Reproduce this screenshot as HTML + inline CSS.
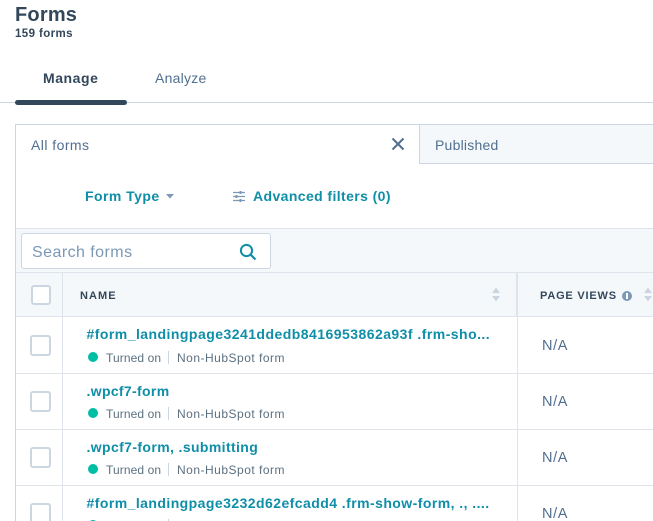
<!DOCTYPE html>
<html>
<head>
<meta charset="utf-8">
<style>
html,body{margin:0;padding:0;background:#fff}
#p{position:relative;width:653px;height:521px;overflow:hidden;background:#fff;font-family:"Liberation Sans",sans-serif;color:#33475b}
#p div,#p span.t{position:absolute;white-space:nowrap}
.b{font-weight:bold}
.r{background:#dfe3eb;height:1px;left:16px;width:637px}
.cb{left:30px;width:17px;height:17px;border:2px solid #cbd6e2;border-radius:3px;background:#fff}
.lnk{left:87px;font-size:14px;font-weight:bold;color:#0f8ea8;line-height:18px}
.dot{left:88px;width:10px;height:10px;border-radius:50%;background:#00bda5}
.st{left:106px;font-size:12px;color:#5c7080;line-height:16px;letter-spacing:.1px}
.sep{left:168px;width:1px;height:13px;background:#cbd6e2}
.ty{left:177px;font-size:12px;color:#5c7080;line-height:16px;letter-spacing:.5px}
.na{left:542px;font-size:14.5px;color:#516f90;line-height:18px;letter-spacing:.6px}
</style>
</head>
<body>
<div id="p">
<div class="b" style="left:15px;top:3px;font-size:20px;line-height:24px;letter-spacing:.2px">Forms</div>
<div class="b" style="left:15px;top:27px;font-size:11.5px;line-height:15px;letter-spacing:.4px">159 forms</div>
<div class="b" style="left:43px;top:70px;font-size:14px;line-height:17px;letter-spacing:.55px">Manage</div>
<div style="left:155px;top:70px;font-size:14px;line-height:17px;color:#516f90;letter-spacing:.25px">Analyze</div>
<div style="left:0;top:102px;width:653px;height:1px;background:#cbd6e2"></div>
<div style="left:15px;top:100px;width:112px;height:5px;border-radius:3px;background:#33475b"></div>

<div style="left:15px;top:124px;width:638px;height:1px;background:#cbd6e2"></div>
<div style="left:15px;top:124px;width:1px;height:397px;background:#cbd6e2"></div>
<div style="left:419px;top:125px;width:234px;height:38px;background:#f5f8fa"></div>
<div style="left:419px;top:124px;width:1px;height:40px;background:#cbd6e2"></div>
<div style="left:419px;top:163px;width:234px;height:1px;background:#cbd6e2"></div>
<div style="left:31px;top:137px;font-size:14px;line-height:17px;color:#516f90;letter-spacing:.45px">All forms</div>
<svg style="position:absolute;left:391px;top:137px" width="14" height="14" viewBox="0 0 14 14"><path d="M1.5 1.5L12.5 12.5M12.5 1.5L1.5 12.5" stroke="#516f90" stroke-width="2" fill="none"/></svg>
<div style="left:435px;top:137px;font-size:14px;line-height:17px;color:#516f90;letter-spacing:.22px">Published</div>

<div class="b" style="left:85px;top:188px;font-size:14px;line-height:17px;color:#0f8ea8;letter-spacing:.45px">Form Type</div>
<svg style="position:absolute;left:166px;top:194px" width="8" height="5" viewBox="0 0 8 5"><path d="M0 0H8L4 4.5Z" fill="#7c98b6"/></svg>
<svg style="position:absolute;left:232px;top:190px" width="14" height="13" viewBox="0 0 14 13"><path d="M1 2.5H13M1 6.5H13M1 10.5H13" stroke="#7c98b6" stroke-width="1.2" fill="none"/><path d="M8.5 1V4M4.5 5V8M8.5 9V12" stroke="#7c98b6" stroke-width="2" fill="none"/></svg>
<div class="b" style="left:253px;top:188px;font-size:14px;line-height:17px;color:#0f8ea8;letter-spacing:.4px">Advanced filters (0)</div>

<div style="left:16px;top:228px;width:637px;height:88px;background:#f5f8fa"></div>
<div class="r" style="top:228px"></div>
<div class="r" style="top:272px"></div>
<div class="r" style="top:316px"></div>
<div style="left:21px;top:233px;width:248px;height:34px;background:#fff;border:1px solid #cbd6e2;border-radius:3px"></div>
<div style="left:32px;top:243px;font-size:16px;line-height:19px;color:#7c98b6;letter-spacing:.45px">Search forms</div>
<svg style="position:absolute;left:239px;top:243px" width="18" height="18" viewBox="0 0 18 18"><circle cx="7.5" cy="7.5" r="5.6" stroke="#0f8ea8" stroke-width="2" fill="none"/><path d="M11.7 11.7L16.5 16.5" stroke="#0f8ea8" stroke-width="2.2" fill="none"/></svg>

<div style="left:62px;top:272px;width:1px;height:249px;background:#dfe3eb"></div>
<div style="left:517px;top:272px;width:1px;height:249px;background:#dfe3eb"></div>
<div style="left:516px;top:272px;width:2px;height:44px;background:#dfe3eb"></div>

<div class="cb" style="left:31px;top:285px;width:16px;height:16px"></div>
<div class="b" style="left:80px;top:289px;font-size:11px;line-height:14px;letter-spacing:1.05px">NAME</div>
<svg style="position:absolute;left:492px;top:287px" width="8" height="15" viewBox="0 0 8 15"><path d="M0 6L4 0.5L8 6ZM0 9L4 14.5L8 9Z" fill="#cbd6e2"/></svg>
<div class="b" style="left:540px;top:289px;font-size:11px;line-height:14px;letter-spacing:.8px">PAGE VIEWS</div>
<div style="left:622px;top:291px;width:10px;height:10px;border-radius:50%;background:#7c98b6"></div>
<div style="left:626px;top:293px;width:2px;height:6px;background:#fff"></div>
<svg style="position:absolute;left:644px;top:287px" width="8" height="15" viewBox="0 0 8 15"><path d="M0 6L4 0.5L8 6ZM0 9L4 14.5L8 9Z" fill="#cbd6e2"/></svg>

<div class="cb" style="top:335px"></div>
<div class="lnk" style="top:325px;left:86.5px;letter-spacing:.46px">#form_landingpage3241ddedb8416953862a93f .frm-sho...</div>
<div class="dot" style="top:352px"></div>
<div class="st" style="top:350px">Turned on</div>
<div class="sep" style="top:351px"></div>
<div class="ty" style="top:350px">Non-HubSpot form</div>
<div class="na" style="top:337px">N/A</div>
<div class="r" style="top:373px"></div>

<div class="cb" style="top:391px"></div>
<div class="lnk" style="top:382px;left:86.5px;letter-spacing:.33px">.wpcf7-form</div>
<div class="dot" style="top:408px"></div>
<div class="st" style="top:406px">Turned on</div>
<div class="sep" style="top:407px"></div>
<div class="ty" style="top:406px">Non-HubSpot form</div>
<div class="na" style="top:393px">N/A</div>
<div class="r" style="top:429px"></div>

<div class="cb" style="top:447px"></div>
<div class="lnk" style="top:438px;left:86.5px;letter-spacing:.38px">.wpcf7-form, .submitting</div>
<div class="dot" style="top:464px"></div>
<div class="st" style="top:462px">Turned on</div>
<div class="sep" style="top:463px"></div>
<div class="ty" style="top:462px">Non-HubSpot form</div>
<div class="na" style="top:449px">N/A</div>
<div class="r" style="top:485px"></div>

<div class="cb" style="top:503px"></div>
<div class="lnk" style="top:494px;left:86.5px;letter-spacing:.44px">#form_landingpage3232d62efcadd4 .frm-show-form, ., ....</div>
<div class="dot" style="top:520px"></div>
<div class="sep" style="top:519px"></div>
<div class="na" style="top:505px">N/A</div>
</div>
</body>
</html>
